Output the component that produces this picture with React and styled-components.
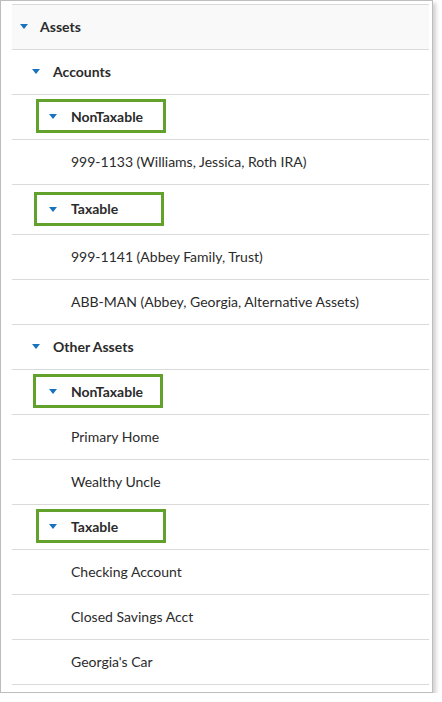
import React from 'react';
import styled, { createGlobalStyle } from 'styled-components';

const Global = createGlobalStyle`
  body {
    margin: 0;
    background: #ffffff;
    font-family: Lato, "Open Sans", Arial, sans-serif;
  }
`;

const Frame = styled.div`
  width: 433px;
  height: 693px;
  box-sizing: border-box;
  border: 1px solid #bdbdbd;
  box-shadow: 3px 3px 4px rgba(0, 0, 0, 0.18);
  padding: 3px 3px 0 11px;
  background: #fff;
`;

const List = styled.div`
  border-top: 1px solid #dadada;
  display: flex;
  flex-direction: column;
`;

const Row = styled.div`
  height: ${p => p.$tall ? 50 : 45}px;
  box-sizing: border-box;
  border-bottom: 1px solid #dadada;
  background: ${p => p.$shaded ? '#f9f9f9' : '#fff'};
  display: flex;
  align-items: center;
  padding-left: ${p => p.$indent}px;
  padding-bottom: 2px;
  font-size: 14px;
  color: #2b2b2b;
`;

const Caret = styled.span`
  width: 0;
  height: 0;
  border-left: ${p => p.$w / 2}px solid transparent;
  border-right: ${p => p.$w / 2}px solid transparent;
  border-top: 5px solid #1a72bd;
  margin-right: ${p => p.$gap}px;
  margin-top: 1px;
`;

const Label = styled.span`
  font-weight: ${p => p.$bold ? 700 : 400};
`;

const Highlight = styled.div`
  width: 130px;
  height: 34px;
  box-sizing: border-box;
  border: 3px solid #62a22c;
  display: flex;
  align-items: center;
  padding-left: ${p => p.$pad}px;
`;

const Group = ({ level, label, shaded, tall }) => {
  const cfg = [
    { indent: 8, w: 9, gap: 12 },
    { indent: 20, w: 8, gap: 13 },
  ][level];
  return (
    <Row $indent={cfg.indent} $shaded={shaded} $tall={tall}>
      <Caret $w={cfg.w} $gap={cfg.gap} />
      <Label $bold>{label}</Label>
    </Row>
  );
};

const Boxed = ({ label, left, pad, tall }) => (
  <Row $indent={left} $tall={tall}>
    <Highlight $pad={pad}>
      <Caret $w={8} $gap={14} />
      <Label $bold>{label}</Label>
    </Highlight>
  </Row>
);

const Leaf = ({ label }) => (
  <Row $indent={59}>
    <Label>{label}</Label>
  </Row>
);

export default function App() {
  return (
    <>
      <Global />
      <Frame>
        <List>
          <Group level={0} label="Assets" shaded />
          <Group level={1} label="Accounts" />
          <Boxed label="NonTaxable" left={24} pad={10} />
          <Leaf label="999-1133 (Williams, Jessica, Roth IRA)" />
          <Boxed label="Taxable" left={22} pad={12} tall />
          <Leaf label="999-1141 (Abbey Family, Trust)" />
          <Leaf label="ABB-MAN (Abbey, Georgia, Alternative Assets)" />
          <Group level={1} label="Other Assets" />
          <Boxed label="NonTaxable" left={21} pad={13} />
          <Leaf label="Primary Home" />
          <Leaf label="Wealthy Uncle" />
          <Boxed label="Taxable" left={24} pad={10} />
          <Leaf label="Checking Account" />
          <Leaf label="Closed Savings Acct" />
          <Leaf label="Georgia's Car" />
        </List>
      </Frame>
    </>
  );
}
